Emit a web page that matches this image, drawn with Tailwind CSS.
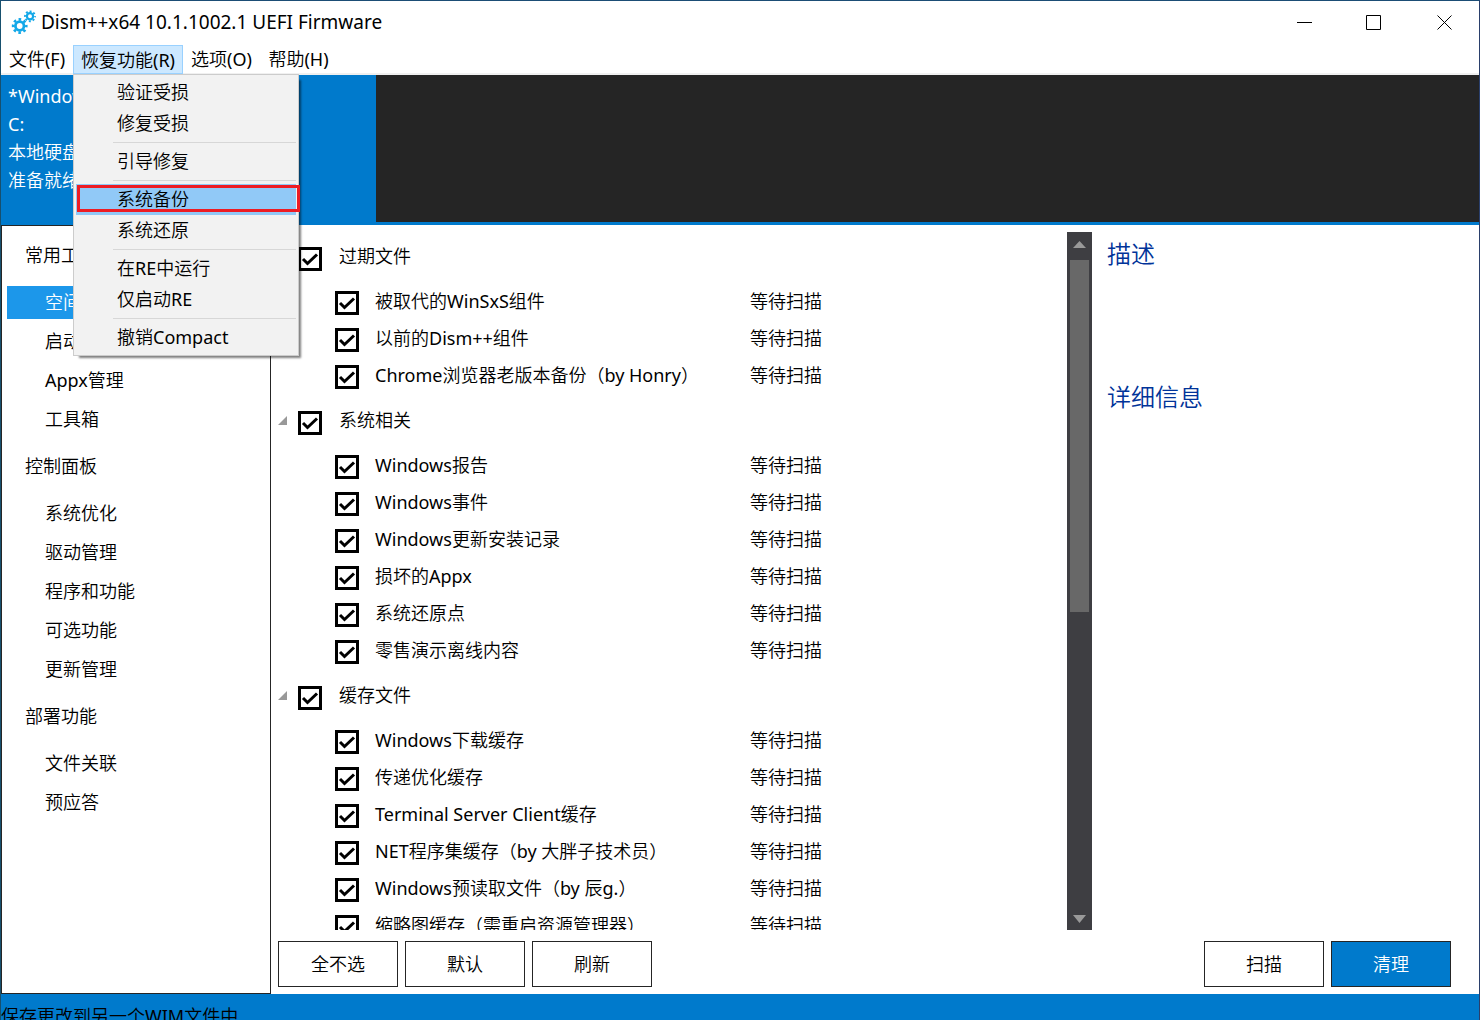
<!DOCTYPE html>
<html lang="zh-CN">
    <head>
        <meta charset="UTF-8" />
        <meta name="viewport" content="width=device-width, initial-scale=1.0" />
        <title>Dism++x64 10.1.1002.1 UEFI Firmware</title>
        <script src="https://cdn.jsdelivr.net/npm/@tailwindcss/browser@4"></script>
        <style>
            body {
                font-family: "Noto Sans", "Noto Sans CJK SC", sans-serif;
            }
        </style>
    </head>
    <body
        class="h-screen flex flex-col overflow-hidden bg-white text-black text-[18px] leading-7 font-[350] border-t border-x border-t-[#1b4d75] border-l-[#17506e] border-r-[#2a3f6b]"
    >
        <!-- 标题栏 -->
        <header class="h-11 shrink-0 flex items-center pl-2.5">
            <svg class="w-[26px] h-[26px] mr-1" viewBox="0 0 26 26" fill="none" stroke="#13a8e8">
                <circle cx="8.700" cy="16" r="4.300" stroke-width="2.800" />
                <circle cx="8.700" cy="16" r="6.600" stroke-width="2.600" stroke-dasharray="2.590 2.590" stroke-dashoffset="1.300" />
                <circle cx="19" cy="6.300" r="3.100" stroke-width="2.200" />
                <circle cx="19" cy="6.300" r="5" stroke-width="1.800" stroke-dasharray="1.963 1.963" stroke-dashoffset="1" />
            </svg>
            <h1 class="flex-1 pb-0.5 text-[19px] font-normal">Dism++x64 10.1.1002.1 UEFI Firmware</h1>
            <button class="w-[70px] h-full grid place-items-center" aria-label="最小化">
                <svg class="w-4 h-4" viewBox="0 0 16 16" stroke="#000"><path d="M1 7.500h15" /></svg>
            </button>
            <button class="w-[70px] h-full grid place-items-center" aria-label="最大化">
                <svg class="w-4 h-4" viewBox="0 0 16 16" fill="none" stroke="#000"><path d="M.5.5h14v14H.5z" /></svg>
            </button>
            <button class="w-[70px] h-full grid place-items-center" aria-label="关闭">
                <svg class="w-4 h-4" viewBox="0 0 16 16" stroke="#000"><path d="M1.500.5l14 14M15.500.5l-14 14" /></svg>
            </button>
        </header>

        <!-- 菜单栏 -->
        <nav class="h-[30px] shrink-0 flex border-b-2 border-[#f0f0f0]">
            <button class="w-[72px]">文件<span class="font-normal">(F)</span></button>
            <div class="relative">
                <button class="w-[110px] h-[29px] pb-1 border border-[#99d1ff] bg-[#cce8ff]">恢复功能<span class="font-normal">(R)</span></button>
                <!-- 下拉菜单 -->
                <div
                    class="absolute left-0 top-[29px] z-10 w-[226px] border border-[#ccc] bg-[#f2f2f2] p-0.5 shadow-[4px_4px_2px_-2px_rgba(0,0,0,0.5)]"
                >
                    <button class="block w-full h-[31px] pl-[41px] pb-0.5 text-left">验证受损</button>
                    <button class="block w-full h-[31px] pl-[41px] pb-0.5 text-left">修复受损</button>
                    <hr class="my-[3px] ml-[37px] border-[#d7d7d7]" />
                    <button class="block w-full h-[31px] pl-[41px] pb-0.5 text-left">引导修复</button>
                    <hr class="my-[3px] ml-[37px] border-[#d7d7d7]" />
                    <div class="relative">
                        <button class="block w-full h-[31px] pl-[41px] pb-0.5 text-left bg-[#91c9f7]">系统备份</button>
                        <span class="absolute left-px top-px -right-1 bottom-[3px] border-3 border-[#ed1c24]"></span>
                    </div>
                    <button class="block w-full h-[31px] pl-[41px] pb-0.5 text-left">系统还原</button>
                    <hr class="my-[3px] ml-[37px] border-[#d7d7d7]" />
                    <button class="block w-full h-[31px] pl-[41px] pb-0.5 text-left">在<span class="font-normal">RE</span>中运行</button>
                    <button class="block w-full h-[31px] pl-[41px] pb-0.5 text-left">仅启动<span class="font-normal">RE</span></button>
                    <hr class="my-[3px] ml-[37px] border-[#d7d7d7]" />
                    <button class="block w-full h-[31px] pl-[41px] pb-0.5 text-left">撤销<span class="font-normal">Compact</span></button>
                </div>
            </div>
            <button class="w-[77px]">选项<span class="font-normal">(O)</span></button>
            <button class="w-[77px]">帮助<span class="font-normal">(H)</span></button>
        </nav>

        <!-- 系统信息 -->
        <section class="h-[150px] shrink-0 flex bg-[#252525] border-b-3 border-[#007acc]">
            <div class="w-[375px] pl-[7px] pt-[7px] bg-[#007acc] text-white">
                <p class="font-normal">*Windows</p>
                <p class="font-normal">C:</p>
                <p>本地硬盘</p>
                <p>准备就绪</p>
            </div>
        </section>

        <div class="flex-1 min-h-0 flex">
            <!-- 左侧导航 -->
            <aside class="w-[270px] shrink-0 border border-[#252525] pt-0.5 px-[5px] leading-[33px]">
                <h2 class="h-[55px] py-[11px] pl-[18px]">常用工具</h2>
                <a href="#" class="block my-[3px] pl-[38px] bg-[#1c97ea] text-white">空间回收</a>
                <a href="#" class="block my-1.5 pl-[38px]">启动项</a>
                <a href="#" class="block my-1.5 pl-[38px]"><span class="font-normal">Appx</span>管理</a>
                <a href="#" class="block mt-1.5 mb-[3px] pl-[38px]">工具箱</a>
                <h2 class="h-[55px] py-[11px] pl-[18px]">控制面板</h2>
                <a href="#" class="block mt-[3px] mb-1.5 pl-[38px]">系统优化</a>
                <a href="#" class="block my-1.5 pl-[38px]">驱动管理</a>
                <a href="#" class="block my-1.5 pl-[38px]">程序和功能</a>
                <a href="#" class="block my-1.5 pl-[38px]">可选功能</a>
                <a href="#" class="block mt-1.5 mb-[3px] pl-[38px]">更新管理</a>
                <h2 class="h-[55px] py-[11px] pl-[18px]">部署功能</h2>
                <a href="#" class="block mt-[3px] mb-1.5 pl-[38px]">文件关联</a>
                <a href="#" class="block my-1.5 pl-[38px]">预应答</a>
            </aside>

            <main class="flex-1 min-w-0 flex flex-col">
                <div class="flex-1 min-h-0 flex pt-[7px]">
                    <!-- 清理项目 -->
                    <div id="list" class="flex-1 min-w-0 overflow-hidden"></div>

                    <!-- 滚动条 -->
                    <div class="w-[25px] shrink-0 flex flex-col items-center bg-[#3e3e42]">
                        <svg class="w-[13px] h-7 shrink-0" viewBox="0 0 13 28" fill="#999"><path d="M6.5 9L13 16H0z" /></svg>
                        <div class="w-[19px] h-[352px] bg-[#686868]"></div>
                        <svg class="w-[13px] h-7 mt-auto" viewBox="0 0 13 28" fill="#999"><path d="M6.5 21L13 13H0z" /></svg>
                    </div>

                    <!-- 描述 -->
                    <div class="w-[387px] shrink-0 pl-[15px] text-2xl text-[#003399]">
                        <h2 class="h-[143px] pt-1.5">描述</h2>
                        <h2 class="pt-1.5">详细信息</h2>
                    </div>
                </div>

                <!-- 操作按钮 -->
                <div class="h-16 shrink-0 flex gap-[7px] pl-[7px] pr-7 py-[11px]">
                    <button class="w-[120px] h-[46px] border border-[#252525]">全不选</button>
                    <button class="w-[120px] h-[46px] border border-[#252525]">默认</button>
                    <button class="w-[120px] h-[46px] border border-[#252525]">刷新</button>
                    <button class="w-[120px] h-[46px] border border-[#252525] ml-auto">扫描</button>
                    <button class="w-[120px] h-[46px] border border-[#252525] bg-[#007acc] text-white">清理</button>
                </div>
            </main>
        </div>

        <!-- 状态栏 -->
        <footer class="h-[26px] shrink-0 overflow-hidden bg-[#007acc] pt-2 whitespace-nowrap">
            保存更改到另一个<span class="font-normal">WIM</span>文件中
        </footer>

        <script>
            const groups = [
                {
                    name: "过期文件",
                    items: ["被取代的WinSxS组件", "以前的Dism++组件", "Chrome浏览器老版本备份（by Honry）"],
                },
                {
                    name: "系统相关",
                    items: [
                        "Windows报告",
                        "Windows事件",
                        "Windows更新安装记录",
                        "损坏的Appx",
                        "系统还原点",
                        "零售演示离线内容",
                    ],
                },
                {
                    name: "缓存文件",
                    items: [
                        "Windows下载缓存",
                        "传递优化缓存",
                        "Terminal Server Client缓存",
                        "NET程序集缓存（by 大胖子技术员）",
                        "Windows预读取文件（by 辰g.）",
                        "缩略图缓存（需重启资源管理器）",
                    ],
                },
            ];

            // 英文部分用正常字重
            function latin(text) {
                return text.replace(/[A-Za-z+.][A-Za-z+. ]*/g, '<span class="font-normal">$&</span>');
            }

            function checkbox(id) {
                return `
            <span class="grid w-6 h-6 shrink-0">
              <input type="checkbox" id="${id}" checked class="peer appearance-none col-start-1 row-start-1 w-6 h-6 border-3 border-black bg-white">
              <svg class="col-start-1 row-start-1 w-6 h-6 pointer-events-none invisible peer-checked:visible" viewBox="0 0 24 24" fill="none" stroke="#000" stroke-width="3"><path d="M5 12l4.500 4.500L19 7.500" /></svg>
            </span>`;
            }

            const list = document.getElementById("list");
            groups.forEach((group, g) => {
                let html = `
          <div class="flex h-[53px] pt-[15px] pl-[7px]">
            <svg class="w-[9px] h-[9px] mt-[5px] mr-[11px]" viewBox="0 0 9 9" fill="#999"><path d="M9 0v9H0z" /></svg>
            ${checkbox(`group-${g}`)}
            <label for="group-${g}" class="h-6 pl-[17px] leading-[18px]">${group.name}</label>
          </div>`;
                group.items.forEach((name, i) => {
                    html += `
          <div class="flex h-[37px] pt-1.5 pl-16">
            ${checkbox(`item-${g}-${i}`)}
            <label for="item-${g}-${i}" class="w-[391px] pl-4 leading-5">${latin(name)}</label>
            <span class="leading-5">等待扫描</span>
          </div>`;
                });
                list.innerHTML += html;
            });
        </script>
    </body>
</html>
